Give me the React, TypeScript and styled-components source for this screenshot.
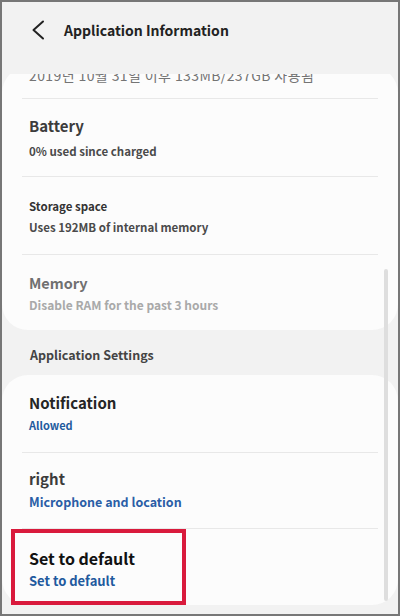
import styled, { createGlobalStyle } from "styled-components";

const GlobalStyle = createGlobalStyle`
  html, body {
    margin: 0;
    padding: 0;
    background: #f2f2f2;
  }
  * {
    box-sizing: border-box;
  }
`;

const FONT = `"Noto Sans CJK KR", "Noto Sans", sans-serif`;

function App() {
  return (
    <>
      <GlobalStyle />
      <Screen>
        <Header>
          <BackButton aria-label="back">
            <svg width="14" height="20" viewBox="0 0 14 20">
              <path
                d="M12 1.5 L2.5 10 L12 18.5"
                fill="none"
                stroke="#222"
                strokeWidth="2"
                strokeLinecap="round"
                strokeLinejoin="round"
              />
            </svg>
          </BackButton>
          <HeaderTitle>Application Information</HeaderTitle>
        </Header>

        <Scroller>
          <Card $first>
            <UsageLine>2019년 10월 31일 이후 133MB/237GB 사용됨</UsageLine>
            <Divider />
            <Row $top={17} $bottom={17}>
              <Title $size={15} $color="#3c3c3c">Battery</Title>
              <Sub $size={11.5} $gap={7} $color="#4a4a4a">0% used since charged</Sub>
            </Row>
            <Divider />
            <Row $top={21} $bottom={19}>
              <Title $size={11.5} $line={16} $color="#333">Storage space</Title>
              <Sub $size={11.5} $gap={5} $color="#4a4a4a">Uses 192MB of internal memory</Sub>
            </Row>
            <Divider />
            <Row $top={18} $bottom={17}>
              <Title $size={14.5} $color="#707070">Memory</Title>
              <Sub $size={12} $gap={4} $color="#a9a9a9">Disable RAM for the past 3 hours</Sub>
            </Row>
          </Card>

          <SectionLabel>Application Settings</SectionLabel>

          <Card>
            <Row $top={18} $bottom={19}>
              <Title $size={15} $color="#252525">Notification</Title>
              <Sub $size={11} $line={15} $gap={5} $color="#1f5a9e">Allowed</Sub>
            </Row>
            <Divider />
            <Row $top={16} $bottom={18}>
              <Title $size={15} $color="#3c3c3c">right</Title>
              <Sub $size={12.5} $gap={5} $color="#2a5ea6">Microphone and location</Sub>
            </Row>
            <Divider />
            <Row $top={0} $bottom={0} $flush>
              <Highlight>
                <Title $size={16} $line={22} $color="#111">Set to default</Title>
                <Sub $size={13} $line={17} $gap={3} $color="#1f5a9e">Set to default</Sub>
              </Highlight>
            </Row>
          </Card>

          <ScrollThumb />
        </Scroller>
      </Screen>
    </>
  );
}

export default App;

interface CardProps {
  $first?: boolean;
}

interface RowProps {
  $top: number;
  $bottom: number;
  $flush?: boolean;
}

interface TextProps {
  $size: number;
  $line?: number;
  $color: string;
  $gap?: number;
}

const Screen = styled.div`
  width: 400px;
  height: 616px;
  border: 2px solid #777;
  background: #f2f2f2;
  display: flex;
  flex-direction: column;
  overflow: hidden;
  font-family: ${FONT};
`;

const Header = styled.div`
  height: 72px;
  padding: 0 0 16px 26px;
  display: flex;
  align-items: center;
  flex-shrink: 0;
`;

const BackButton = styled.button`
  width: 20px;
  height: 24px;
  padding: 0;
  border: 0;
  background: none;
  display: flex;
  align-items: center;
  justify-content: center;
  margin-right: 16px;
`;

const HeaderTitle = styled.h1`
  margin: 0;
  font-size: 14px;
  line-height: 20px;
  font-weight: 700;
  color: #222;
`;

const Scroller = styled.div`
  position: relative;
  flex: 1;
  overflow: hidden;
`;

const Card = styled.div<CardProps>`
  background: #fcfcfc;
  border-radius: 26px;
  margin-top: ${p => (p.$first ? 1 : 0)}px;
`;

const UsageLine = styled.div`
  margin-top: -8px;
  padding: 0 0 15px 27px;
  font-size: 14px;
  line-height: 16px;
  font-weight: 400;
  letter-spacing: 0.4px;
  color: #747474;
  white-space: nowrap;
`;

const Divider = styled.div`
  height: 1px;
  margin: 0 20px;
  background: #e8e8e8;
`;

const Row = styled.div<RowProps>`
  display: flex;
  flex-direction: column;
  align-items: flex-start;
  padding: ${p => p.$top}px 20px ${p => p.$bottom}px ${p => (p.$flush ? 9 : 27)}px;
`;

const Title = styled.div<TextProps>`
  font-size: ${p => p.$size}px;
  line-height: ${p => p.$line ?? 20}px;
  font-weight: 600;
  color: ${p => p.$color};
`;

const Sub = styled.div<TextProps>`
  margin-top: ${p => p.$gap ?? 4}px;
  font-size: ${p => p.$size}px;
  line-height: ${p => p.$line ?? 16}px;
  font-weight: 600;
  color: ${p => p.$color};
`;

const SectionLabel = styled.div`
  padding: 17px 0 12px 28px;
  font-size: 12.5px;
  line-height: 16px;
  font-weight: 600;
  color: #444;
`;

const Highlight = styled.div`
  width: 175px;
  border: 4.5px solid #d91a3c;
  padding: 14px 0 12px 14px;
`;

const ScrollThumb = styled.div`
  position: absolute;
  top: 195px;
  right: 10px;
  width: 4px;
  height: 332px;
  border-radius: 2px;
  background: #dedede;
`;
